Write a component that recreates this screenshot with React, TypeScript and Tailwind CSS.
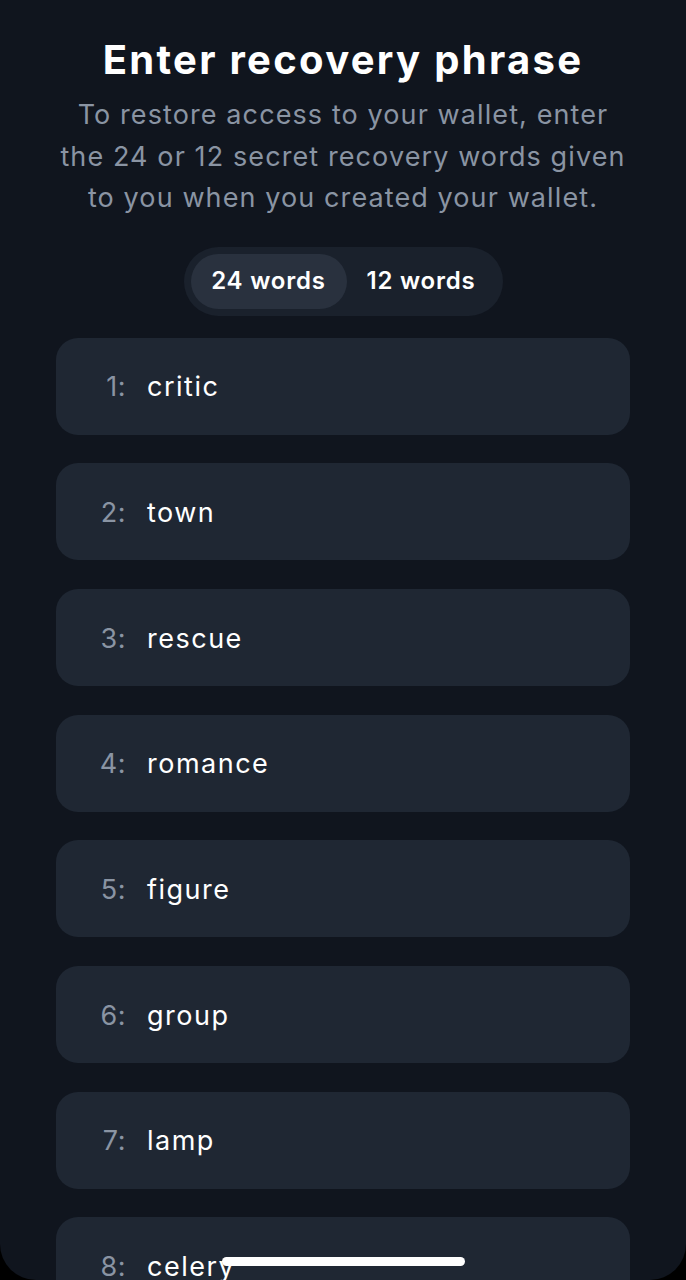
import React, { useState } from "react";

const words = ["critic", "town", "rescue", "romance", "figure", "group", "lamp", "celery"];

const App: React.FC = () => {
  const [mode, setMode] = useState<24 | 12>(24);

  return (
    <div className="h-[1280px] w-full overflow-hidden bg-black">
      <div
        className="relative h-full overflow-hidden rounded-b-[36px] bg-[#10151e] px-[56px] pt-[36px]"
        style={{ fontFamily: "Inter, 'Noto Sans', sans-serif" }}
      >
        {/* Titel */}
        <h1 className="text-center text-[40px] font-bold leading-[48px] tracking-[2.3px] text-white">
          Enter recovery phrase
        </h1>
        <p className="mt-[10px] text-center text-[27px] leading-[41.5px] tracking-[1.1px] text-[#8a94a3]">
          To restore access to your wallet, enter
          <br />
          the 24 or 12 secret recovery words given
          <br />
          to you when you created your wallet.
        </p>

        {/* Umschalter */}
        <div className="mt-[28px] flex justify-center">
          <div className="flex h-[69px] items-center rounded-full bg-[#1a212c] p-[7px]">
            <button
              onClick={() => setMode(24)}
              className={`h-[55px] w-[156px] rounded-full text-[24px] font-semibold tracking-[0.8px] text-white ${
                mode === 24 ? "bg-[#29313e]" : ""
              }`}
            >
              24 words
            </button>
            <button
              onClick={() => setMode(12)}
              className={`h-[55px] w-[149px] rounded-full text-[24px] font-semibold tracking-[0.8px] text-white ${
                mode === 12 ? "bg-[#29313e]" : ""
              }`}
            >
              12 words
            </button>
          </div>
        </div>

        {/* Wortliste */}
        <div className="mt-[22px] flex flex-col gap-[28.7px]">
          {words.map((w, i) => (
            <div
              key={w}
              className="flex h-[97px] items-center rounded-[22px] bg-[#1f2733] pt-[3px] text-[27px]"
            >
              <span className="w-[70px] text-right tracking-[0.5px] text-[#8a94a3]">{i + 1}:</span>
              <span className="ml-[21px] tracking-[1.5px] text-white">{w}</span>
            </div>
          ))}
        </div>

        {/* Home-Indikator */}
        <div className="absolute bottom-[14px] left-[222px] h-[9px] w-[243px] rounded-full bg-white" />
      </div>
    </div>
  );
};

export default App;
